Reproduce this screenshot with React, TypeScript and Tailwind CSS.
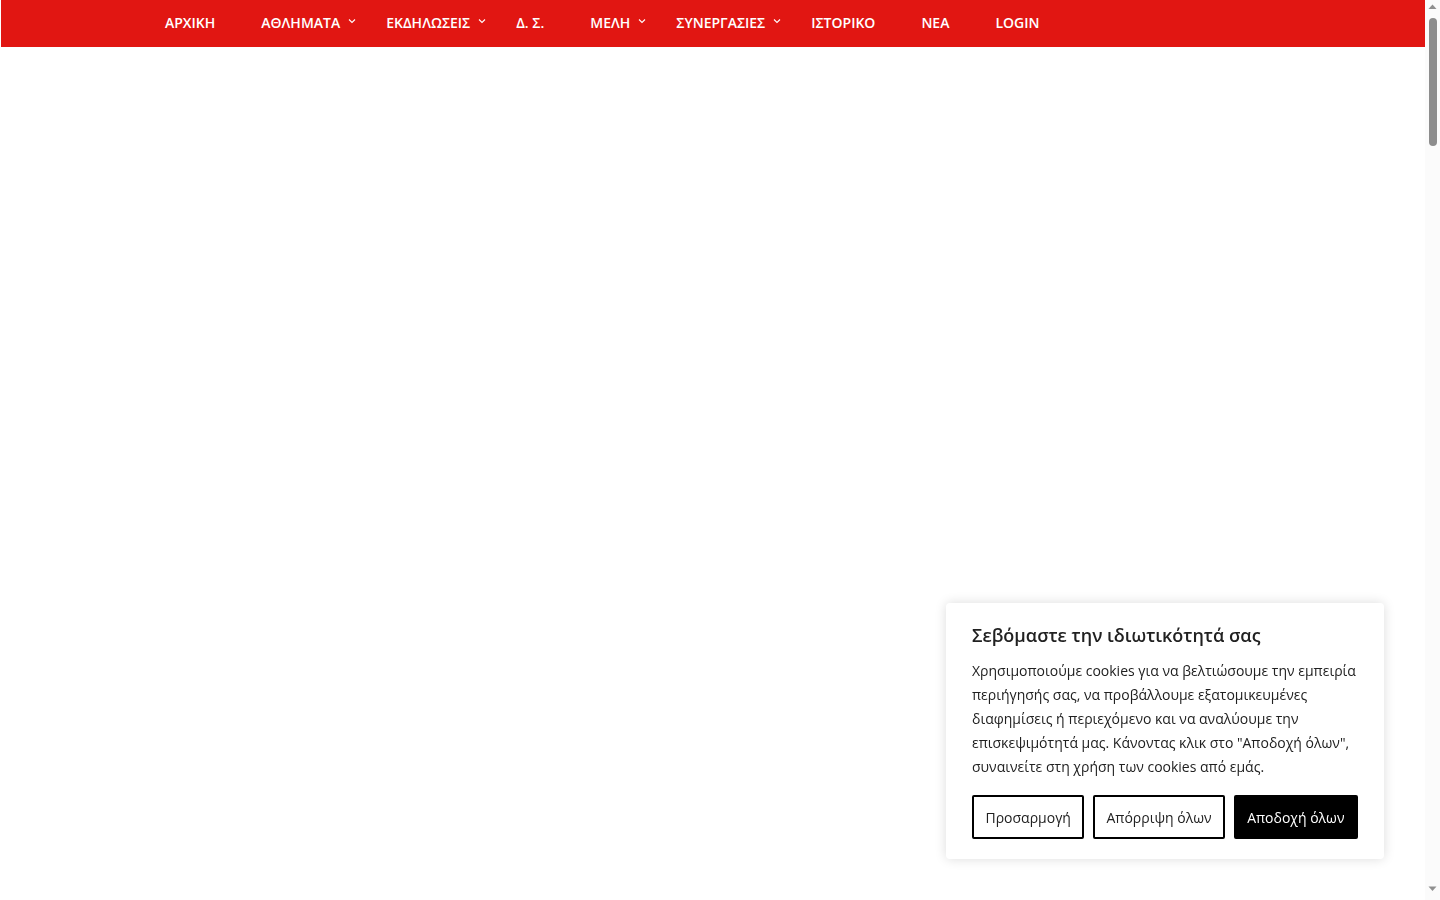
import React from "react";

type NavItem = { label: string; dropdown?: boolean };

const navItems: NavItem[] = [
  { label: "ΑΡΧΙΚΗ" },
  { label: "ΑΘΛΗΜΑΤΑ", dropdown: true },
  { label: "ΕΚΔΗΛΩΣΕΙΣ", dropdown: true },
  { label: "Δ. Σ." },
  { label: "ΜΕΛΗ", dropdown: true },
  { label: "ΣΥΝΕΡΓΑΣΙΕΣ", dropdown: true },
  { label: "ΙΣΤΟΡΙΚΟ" },
  { label: "ΝΕΑ" },
  { label: "LOGIN" },
];

const Chevron: React.FC = () => (
  <svg
    width="8"
    height="6"
    viewBox="0 0 8 6"
    fill="none"
    className="ml-[8px] mt-[-3px]"
  >
    <path d="M1 1.5 L4 4.5 L7 1.5" stroke="white" strokeWidth="1.1" />
  </svg>
);

// нарисованная полоса прокрутки, как в скриншоте
const Scrollbar: React.FC = () => (
  <div className="flex h-screen w-[15px] shrink-0 flex-col items-center bg-[#fbfbfb]">
    <svg width="9" height="6" viewBox="0 0 9 6" className="mt-[4px]">
      <polygon points="4.5,0.5 8.5,5 0.5,5" fill="#8f8f8f" />
    </svg>
    <div className="mt-[8px] h-[128px] w-[8px] rounded-full bg-[#8d8d8d]" />
    <div className="flex-1" />
    <svg width="9" height="6" viewBox="0 0 9 6" className="mb-[8px]">
      <polygon points="0.5,0.5 8.5,0.5 4.5,5" fill="#8f8f8f" />
    </svg>
  </div>
);

const CookieBanner: React.FC = () => (
  <div className="fixed bottom-[41px] right-[56px] w-[438px] rounded-[4px] bg-white px-[26px] pt-[17px] pb-[20px] shadow-[0_0_12px_rgba(0,0,0,0.14)]">
    <h2 className="text-[18px] leading-[30px] font-semibold text-[#212121]">
      Σεβόμαστε την ιδιωτικότητά σας
    </h2>
    <p className="mt-[9px] text-[14px] leading-[24px] text-[#212121]">
      Χρησιμοποιούμε cookies για να βελτιώσουμε την εμπειρία περιήγησής σας, να
      προβάλλουμε εξατομικευμένες διαφημίσεις ή περιεχόμενο και να αναλύουμε
      την επισκεψιμότητά μας. Κάνοντας κλικ στο "Αποδοχή όλων", συναινείτε στη
      χρήση των cookies από εμάς.
    </p>
    <div className="mt-[16px] flex gap-[9px]">
      <button className="h-[44px] w-[113px] rounded-[2px] border-2 border-black bg-white text-[14px] text-[#212121]">
        Προσαρμογή
      </button>
      <button className="h-[44px] w-[132px] rounded-[2px] border-2 border-black bg-white text-[14px] text-[#212121]">
        Απόρριψη όλων
      </button>
      <button className="h-[44px] w-[125px] rounded-[2px] border-2 border-black bg-black text-[14px] text-white">
        Αποδοχή όλων
      </button>
    </div>
  </div>
);

export default function App() {
  return (
    <div
      className="flex h-screen overflow-hidden bg-white"
      style={{ fontFamily: '"Open Sans", "Noto Sans", sans-serif' }}
    >
      <div className="min-w-0 flex-1">
        <header className="ml-px flex h-[47px] items-center bg-[#e11612] pb-[2px] pl-[141px]">
          <nav className="flex items-center">
            {navItems.map((item) => (
              <a
                key={item.label}
                href="#"
                className={`flex items-center pl-[23px] text-[14px] font-semibold text-white ${
                  item.dropdown ? "pr-[7px]" : "pr-[23px]"
                }`}
              >
                {item.label}
                {item.dropdown && <Chevron />}
              </a>
            ))}
          </nav>
        </header>
      </div>
      <Scrollbar />
      <CookieBanner />
    </div>
  );
}
